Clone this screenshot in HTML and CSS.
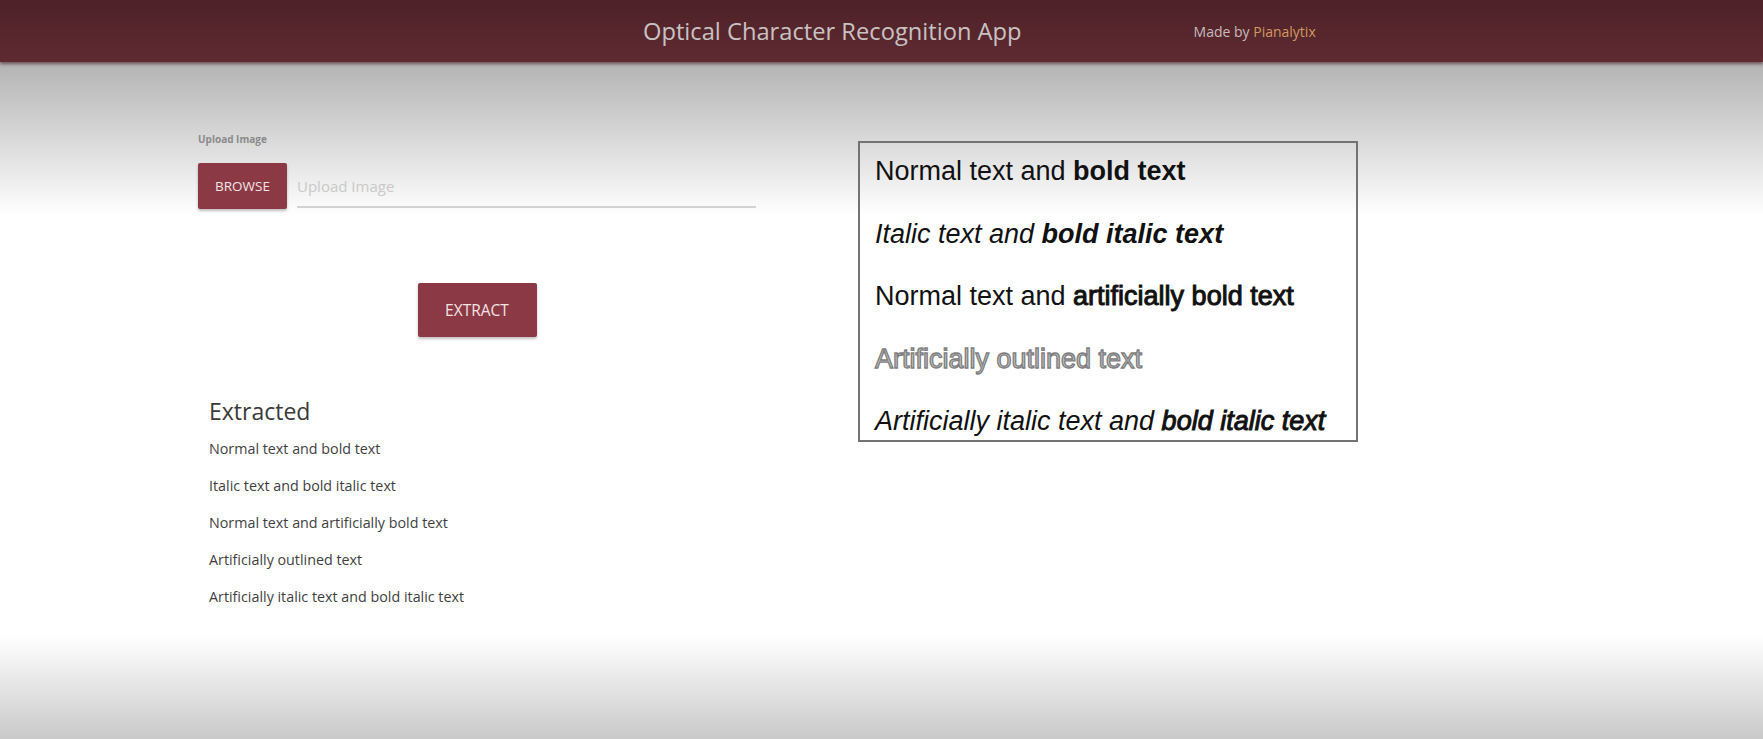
FILE: index.html
```html
<!DOCTYPE html>
<html lang="en">
<head>
<meta charset="utf-8">
<title>Optical Character Recognition App</title>
<link rel="stylesheet" href="styles.css">
</head>
<body>
<header class="topbar">
  <h1 class="app-title">Optical Character Recognition App</h1>
  <div class="credit">Made by <span class="brand">Pianalytix</span></div>
</header>
<main class="content">
  <section class="left-col">
    <label class="field-label">Upload Image</label>
    <div class="upload-row">
      <button class="btn btn-browse">BROWSE</button>
      <div class="file-input">Upload Image</div>
    </div>
    <div class="extract-wrap">
      <button class="btn btn-extract">EXTRACT</button>
    </div>
    <div class="result">
      <h2 class="result-title">Extracted</h2>
      <p class="result-line">Normal text and bold text</p>
      <p class="result-line">Italic text and bold italic text</p>
      <p class="result-line">Normal text and artificially bold text</p>
      <p class="result-line">Artificially outlined text</p>
      <p class="result-line">Artificially italic text and bold italic text</p>
    </div>
  </section>
  <section class="preview">
    <div class="pv-line">Normal text and <b>bold text</b></div>
    <div class="pv-line italic">Italic text and <b>bold italic text</b></div>
    <div class="pv-line">Normal text and <span class="fake-bold">artificially bold text</span></div>
    <div class="pv-line outlined">Artificially outlined text</div>
    <div class="pv-line italic">Artificially italic text and <span class="fake-bold">bold italic text</span></div>
  </section>
</main>
</body>
</html>
```
FILE: styles.css
```css
html, body {
  margin: 0;
  padding: 0;
}
body {
  width: 1763px;
  height: 739px;
  overflow: hidden;
  font-family: "Open Sans", "Noto Sans", sans-serif;
  background: linear-gradient(to bottom,
    #b3b3b3 0px, #b3b3b3 62px, #dedede 150px, #ffffff 215px,
    #ffffff 636px, #e8e8e8 680px, #c9c9c9 739px);
}
.topbar {
  height: 62px;
  box-sizing: border-box;
  display: flex;
  align-items: center;
  padding-left: 643px;
  gap: 172px;
  background: linear-gradient(to bottom, #4d2228, #5f2a31);
  box-shadow: 0 2px 3px rgba(60, 20, 25, 0.6);
  position: relative;
}
.app-title {
  margin: 0;
  font-weight: 400;
  font-size: 23.7px;
  color: #c9c2c3;
  white-space: nowrap;
}
.credit {
  font-size: 14px;
  color: #c6bcbd;
  white-space: nowrap;
}
.brand {
  color: #d09a62;
}
.content {
  display: flex;
  align-items: flex-start;
  padding-left: 198px;
  padding-top: 70px;
  gap: 102px;
}
.left-col {
  width: 558px;
  display: flex;
  flex-direction: column;
}
.field-label {
  font-size: 10px;
  font-weight: 700;
  color: #8a8a8a;
  line-height: 14px;
}
.upload-row {
  display: flex;
  align-items: flex-end;
  margin-top: 17px;
  gap: 10px;
}
.btn {
  border: none;
  background: #8b3a45;
  color: #f3e3e4;
  font-family: "Open Sans", "Noto Sans", sans-serif;
  border-radius: 2px;
  box-shadow: 0 2px 3px rgba(0, 0, 0, 0.25);
  padding: 0;
}
.btn-browse {
  width: 89px;
  height: 46px;
  font-size: 13.5px;
}
.file-input {
  flex: 1;
  height: 44px;
  box-sizing: border-box;
  border-bottom: 2px solid #d2d2d2;
  font-size: 15px;
  color: #c9c9c9;
  line-height: 44px;
  margin-bottom: 1px;
}
.extract-wrap {
  display: flex;
  justify-content: center;
  margin-top: 74px;
}
.btn-extract {
  width: 119px;
  height: 54px;
  font-size: 15.5px;
}
.result {
  padding-left: 11px;
  margin-top: 60px;
}
.result-title {
  margin: 0;
  font-weight: 400;
  font-size: 23px;
  color: #3a3a3a;
  line-height: 28px;
}
.result-line {
  margin: 0;
  font-size: 14.3px;
  color: #3f3f3f;
  line-height: 37px;
}
.result-title + .result-line {
  margin-top: 5px;
}
.preview {
  width: 500px;
  height: 301px;
  margin-top: 9px;
  box-sizing: border-box;
  border: 2px solid #737373;
  padding: 5px 0 0 15px;
  font-family: "Liberation Sans", Arial, sans-serif;
  font-size: 27px;
  color: #111;
  background: transparent;
  overflow: hidden;
  display: flex;
  flex-direction: column;
  gap: 16.5px;
}
.pv-line {
  height: 46px;
  line-height: 46px;
  white-space: nowrap;
}
.italic {
  font-style: italic;
}
.fake-bold {
  -webkit-text-stroke: 1px #111;
}
.outlined {
  color: #c2c2c2;
  -webkit-text-stroke: 1.3px #7e7e7e;
}
```
